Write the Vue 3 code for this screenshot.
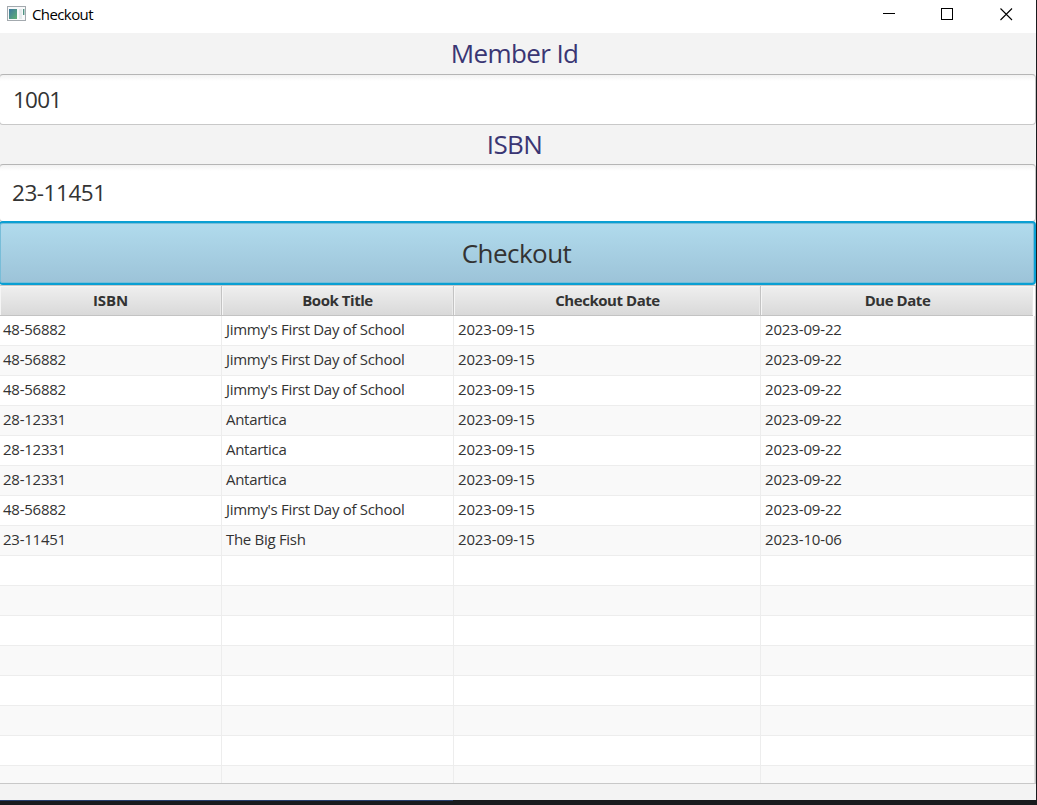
<script setup>
const columns = [
  { key: 'isbn', title: 'ISBN' },
  { key: 'title', title: 'Book Title' },
  { key: 'out', title: 'Checkout Date' },
  { key: 'due', title: 'Due Date' },
]
const jimmy = { isbn: '48-56882', title: "Jimmy's First Day of School", out: '2023-09-15', due: '2023-09-22' }
const antartica = { isbn: '28-12331', title: 'Antartica', out: '2023-09-15', due: '2023-09-22' }
const rows = [
  jimmy, jimmy, jimmy, antartica, antartica, antartica, jimmy,
  { isbn: '23-11451', title: 'The Big Fish', out: '2023-09-15', due: '2023-10-06' },
  ...Array.from({ length: 8 }, () => ({})),
]
</script>

<template>
  <div class="desktop">
    <div class="window">
      <header class="titlebar">
        <svg class="app-icon" width="19" height="16" viewBox="0 0 19 16">
          <defs>
            <linearGradient id="pane" x1="0" y1="0" x2="1" y2="1">
              <stop offset="0" stop-color="#3d78a0" />
              <stop offset="1" stop-color="#5fb072" />
            </linearGradient>
          </defs>
          <rect x="0.5" y="0.5" width="18" height="14" fill="#f8f9fa" stroke="#a3a9ae" />
          <rect x="2" y="3" width="8" height="10" fill="url(#pane)" />
          <rect x="12" y="3" width="3" height="10" fill="#e4eaec" />
          <rect x="16" y="3" width="1.4" height="6" fill="#4f9484" />
        </svg>
        <span class="caption">Checkout</span>
        <svg class="controls" width="134" height="14" viewBox="0 0 134 14" fill="none" stroke="#000">
          <path d="M0 6.5H12" />
          <rect x="58.5" y="1.5" width="11" height="11" />
          <path d="M117.5 1.5L129 13M129 1.5L117.5 13" stroke-width="1.1" />
        </svg>
      </header>
      <div class="label member"><span>Member Id</span></div>
      <div class="field first"><span>1001</span></div>
      <div class="label isbn"><span>ISBN</span></div>
      <div class="field second"><span>23-11451</span></div>
      <button class="action"><span>Checkout</span></button>
      <div class="table">
        <div class="row head">
          <div v-for="c in columns" :key="c.key" class="cell" :class="'h-' + c.key"><span>{{ c.title }}</span></div>
          <div class="corner"></div>
        </div>
        <div v-for="(r, i) in rows" :key="i" class="row body" :class="{ odd: i % 2 }">
          <div v-for="c in columns" :key="c.key" class="cell" :class="'c-' + c.key"><span>{{ r[c.key] }}</span></div>
        </div>
      </div>
    </div>
    <div class="accent"></div>
  </div>
</template>

<style>
body { margin: 0; overflow: hidden; }
</style>

<style scoped>
* { box-sizing: border-box; }
.desktop {
  width: 1037px; height: 805px; overflow: hidden; background: #191a1d;
  font-family: "Open Sans", "Noto Sans", sans-serif; color: #333;
}
.window { width: 1036px; height: 800px; background: #f3f3f3; display: flex; flex-direction: column; overflow: hidden; }
.titlebar { height: 33px; flex: none; background: #fff; display: flex; align-items: flex-start; padding: 6px 19px 0 7px; }
.caption { margin: -2px 0 0 6px; font-size: 15px; line-height: 20px; letter-spacing: -0.6px; color: #000; }
.controls { margin: 1px 0 0 auto; }
.label { flex: none; display: flex; justify-content: center; color: #3a3673; font-size: 26px; padding-right: 7px; }
.member { height: 41px; line-height: 40px; letter-spacing: -0.6px; }
.isbn { height: 39px; line-height: 38px; letter-spacing: -0.6px; }
.field {
  flex: none; background: linear-gradient(#f2f2f2, #fff 6px); border: 1px solid #c8c8c8;
  border-top-color: #b5b5b5; border-radius: 4px;
  margin-left: -1px; padding-left: 12px; font-size: 22.5px;
}
.first { height: 51px; line-height: 50px; }
.second { height: 58px; line-height: 56px; }
.field span { letter-spacing: -0.45px; }
.first span { letter-spacing: -0.8px; margin-left: 1px; }
.action {
  flex: none; height: 64px; margin: -1px 0 0 -1px; padding: 0 1px 0 0; border: 2px solid #0a9fd3;
  border-left-width: 1px; border-radius: 4px; color: #333;
  background: linear-gradient(#b1dbed, #9cc3d8); box-shadow: inset 0 0 0 1px #78bdd8;
  font-family: inherit; font-size: 26px; line-height: 60px; letter-spacing: -0.55px;
}
.table {
  height: 499px; flex: none; overflow: hidden; border-top: 1px solid #c8c8c8; border-bottom: 1px solid #c8c8c8;
  border-right: 1px solid #c8c8c8; background: #fff;
}
.row { display: grid; grid-template-columns: 222px 232px 307px 1fr; font-size: 15px; }
.head { grid-template-columns: 222px 232px 307px 272px 1fr; height: 30px; font-weight: 700; color: #333; }
.head .cell {
  border-right: 1px solid #c3c3c3; border-bottom: 1px solid #c3c3c3; background: linear-gradient(#efefef, #d9d9d9);
  box-shadow: inset 1px 1px 0 #f5f5f5, inset -1px 0 0 #e9e9e9; text-align: center; line-height: 28px;
  letter-spacing: -0.45px;
}
.head .h-isbn { letter-spacing: -0.15px; }
.head .h-out { padding-left: 1px; }
.head .h-due { border-right: 0; padding-left: 1px; }
.body { height: 30px; border-bottom: 1px solid #ededed; background: #fff; line-height: 26px; }
.odd { background: #f9f9f9; }
.body .cell { height: 30px; border-right: 1px solid #ededed; padding-left: 4px; white-space: nowrap; letter-spacing: -0.15px; }
.body .c-isbn { padding-left: 3px; letter-spacing: -0.25px; }
.body .c-title { letter-spacing: -0.3px; }
.body .c-due { border-right-color: #e2e2e2; }
.accent { width: 453px; height: 1px; background: #283f6d; }
</style>
